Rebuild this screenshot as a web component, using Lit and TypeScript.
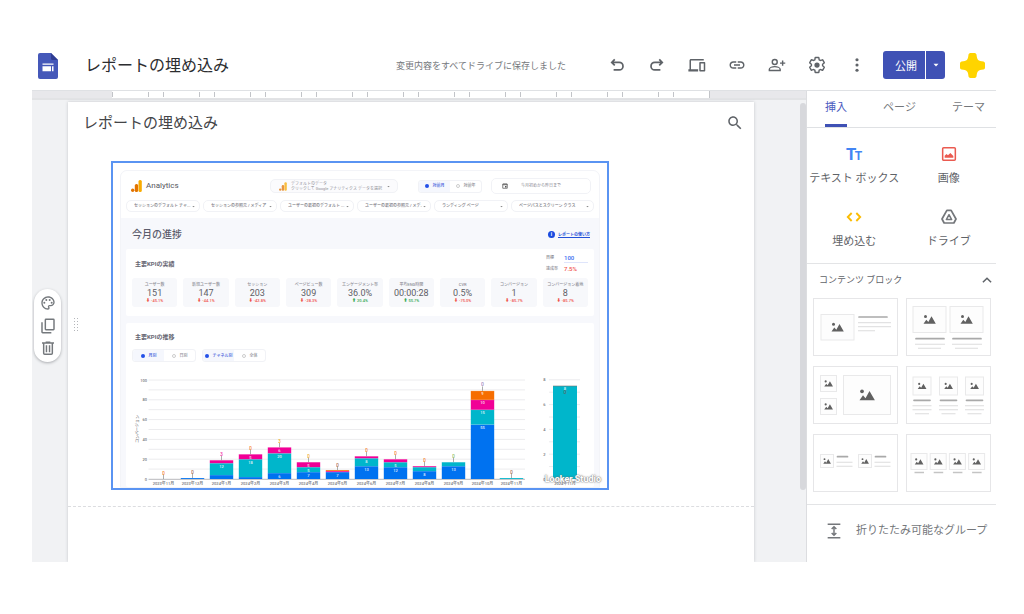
import { LitElement, html, svg, css } from "lit";
import { customElement, property, state } from "lit/decorators.js";

const gearPath =
  "M19.43 12.98c.04-.32.07-.64.07-.98s-.03-.66-.07-.98l2.11-1.65c.19-.15.24-.42.12-.64l-2-3.46c-.09-.16-.26-.25-.44-.25-.06 0-.12.01-.17.03l-2.49 1c-.52-.4-1.08-.73-1.69-.98l-.38-2.65C14.46 2.18 14.25 2 14 2h-4c-.25 0-.46.18-.49.42l-.38 2.65c-.61.25-1.17.59-1.69.98l-2.49-1c-.06-.02-.12-.03-.18-.03-.17 0-.34.09-.43.25l-2 3.46c-.13.22-.07.49.12.64l2.11 1.65c-.04.32-.07.65-.07.98s.03.66.07.98l-2.11 1.65c-.19.15-.24.42-.12.64l2 3.46c.09.16.26.25.44.25.06 0 .12-.01.17-.03l2.49-1c.52.4 1.08.73 1.69.98l.38 2.65c.03.24.24.42.49.42h4c.25 0 .46-.18.49-.42l.38-2.65c.61-.25 1.17-.59 1.69-.98l2.49 1c.06.02.12.03.18.03.17 0 .34-.09.43-.25l2-3.46c.12-.22.07-.49-.12-.64l-2.11-1.65z";

const icons: Record<string, unknown> = {
  undo: svg`<path d="M9 4.5 5 8.500l4 4M5.300 8.500H15a4.500 4.500 0 0 1 0 10H7.500" fill="none" stroke="currentColor" stroke-width="2.300"/>`,
  redo: svg`<path d="m15 4.500 4 4-4 4M18.700 8.500H9a4.500 4.500 0 0 0 0 10h7.500" fill="none" stroke="currentColor" stroke-width="2.300"/>`,
  devices: svg`<path d="M4 6h17V4H4c-1.100 0-2 .9-2 2v11.500H0.500V20.500h13v-3H4V6zm18 2h-6c-.55 0-1 .45-1 1v10.500c0 .55.45 1 1 1h6c.55 0 1-.45 1-1V9c0-.55-.45-1-1-1zm-1 10.500h-4V10h4v8.500z"/>`,
  link: svg`<path d="M3.900 12c0-1.710 1.390-3.100 3.100-3.100h4V7H7c-2.760 0-5 2.240-5 5s2.240 5 5 5h4v-1.900H7c-1.710 0-3.100-1.390-3.100-3.100zM8 13h8v-2H8v2zm9-6h-4v1.900h4c1.710 0 3.100 1.390 3.100 3.100s-1.390 3.100-3.100 3.100h-4V17h4c2.760 0 5-2.240 5-5s-2.240-5-5-5z"/>`,
  person: svg`<g fill="none" stroke="currentColor" stroke-width="1.900"><circle cx="9" cy="8" r="3.300"/><path d="M1.800 19.300v-1.500c0-2.400 4.400-3.600 7.200-3.600s7.200 1.200 7.200 3.600v1.500zM19.500 6v7M16 9.500h7"/></g>`,
  gear: svg`<path d=${gearPath} fill="none" stroke="currentColor" stroke-width="1.900"/><circle cx="12" cy="12" r="3.500"/>`,
  dots: svg`<circle cx="12" cy="5" r="2.100"/><circle cx="12" cy="12" r="2.100"/><circle cx="12" cy="19" r="2.100"/>`,
  search: svg`<path d="M15.500 14h-.79l-.28-.27C15.410 12.590 16 11.110 16 9.500 16 5.910 13.090 3 9.500 3S3 5.910 3 9.500 5.910 16 9.500 16c1.610 0 3.090-.59 4.230-1.570l.27.28v.79l5 4.990L20.490 19l-4.990-5zm-6 0C7.010 14 5 11.990 5 9.500S7.010 5 9.500 5 14 7.010 14 9.500 11.990 14 9.500 14z"/>`,
  palette: svg`<path d="M12 22C6.490 22 2 17.510 2 12S6.490 2 12 2s10 4.040 10 9c0 3.310-2.690 6-6 6h-1.770c-.28 0-.5.22-.5.5 0 .12.05.23.13.33.41.47.64 1.060.64 1.670A2.500 2.500 0 0 1 12 22zm0-18c-4.410 0-8 3.590-8 8s3.590 8 8 8c.28 0 .5-.22.5-.5a.54.54 0 0 0-.14-.35c-.41-.46-.63-1.050-.63-1.650a2.500 2.500 0 0 1 2.500-2.500H16c2.210 0 4-1.790 4-4 0-3.860-3.590-7-8-7z"/><circle cx="6.500" cy="11.500" r="1.500"/><circle cx="9.500" cy="7.500" r="1.500"/><circle cx="14.500" cy="7.500" r="1.500"/><circle cx="17.500" cy="11.500" r="1.500"/>`,
  copy: svg`<g fill="none" stroke="currentColor" stroke-width="2.200"><rect x="8" y="2" width="13" height="15.500" rx="1"/><path d="M3 6.500V21a1 1 0 0 0 1 1h13"/></g>`,
  trash: svg`<g fill="none" stroke="currentColor" stroke-width="2.200"><path d="M3 4.500h18M8.500 3.200h7M5.500 5v15a1.500 1.500 0 0 0 1.500 1.500h10a1.500 1.500 0 0 0 1.500-1.500V5M9.700 8v10.500M14.300 8v10.500"/></g>`,
  text: svg`<text x="0" y="21" font-family="Roboto" font-weight="700" font-size="25">T</text><text x="13" y="21" font-family="Roboto" font-weight="700" font-size="18">T</text>`,
  image: svg`<rect x="2.500" y="2.500" width="19" height="19" rx="1.500" fill="none" stroke="currentColor" stroke-width="2.300"/><path d="M5.500 17.500v-3l2.800-2.500 2.200 2 3.500-3.500 4.500 4.500v2.500z"/>`,
  code: svg`<path d="M8.500 6 2.700 12l5.800 6M15.500 6l5.800 6-5.800 6" fill="none" stroke="currentColor" stroke-width="2.800"/>`,
  drive: svg`<g fill="none" stroke="currentColor" stroke-linejoin="round"><path stroke-width="2.600" d="M8.800 2h6.400L22.500 15l-3.200 6H4.700l-3.200-6z"/><path stroke-width="2.200" d="m12 8.500 4 7.300H8z"/></g>`,
  up: svg`<path d="m5 16 7-7 7 7" fill="none" stroke="currentColor" stroke-width="2.600"/>`,
  group: svg`<g fill="none" stroke="currentColor" stroke-width="2.200"><path d="M2.500 2h19M2.500 22h19M12 6v12M8.500 9 12 5.500 15.500 9M8.500 15l3.500 3.500 3.500-3.500"/></g>`,
  calendar: svg`<path d="M3 4h18v17H3zM3 7h18M8 2v4M16 2v4" fill="none" stroke="currentColor" stroke-width="3"/><path d="M12 12h6v6h-6z"/>`,
  caret: svg`<path d="M6 9h12l-6 6.500z"/>`,
};

@customElement("app-icon")
export class AppIcon extends LitElement {
  @property() name = "";
  static styles = css`
    :host { display: inline-flex; width: 16px; height: 16px; flex: none; }
    svg { width: 100%; height: 100%; fill: currentColor; overflow: visible; }
  `;
  render() {
    return html`<svg viewBox="0 0 24 24" aria-hidden="true">${icons[this.name]}</svg>`;
  }
}

const BLUE = "#0072f0";
const TEAL = "#00b6cb";
const PINK = "#f10096";
const ORANGE = "#f66d00";

interface Month {
  name: string;
  parts: [number, string, string][];
  top?: [string, number, string];
}

const months: Month[] = [
  { name: "2023年11月", parts: [], top: ["0", 6, ORANGE] },
  { name: "2023年12月", parts: [[1, BLUE, ""]], top: ["0", 7, "#a0522d"] },
  { name: "2024年1月", parts: [[4, BLUE, ""], [12, TEAL, "12"], [3, PINK, ""]], top: ["3", 25, PINK] },
  { name: "2024年2月", parts: [[2, BLUE, ""], [18, TEAL, "18"], [5, PINK, "5"]], top: ["0", 31, ORANGE] },
  { name: "2024年3月", parts: [[6, BLUE, "6"], [20, TEAL, "20"], [6, PINK, "6"]], top: ["3", 38, "#f0a000"] },
  { name: "2024年4月", parts: [[7, BLUE, "7"], [5, TEAL, "5"], [5, PINK, "5"]], top: ["0", 23, "#f0a000"] },
  { name: "2024年5月", parts: [[7, BLUE, "7"], [1, PINK, ""], [1, ORANGE, ""]], top: ["0", 14, "#a0522d"] },
  { name: "2024年6月", parts: [[13, BLUE, "13"], [8, TEAL, "8"], [2, PINK, ""]], top: ["0", 29, ORANGE] },
  { name: "2024年7月", parts: [[12, BLUE, "12"], [5, TEAL, "5"], [3, PINK, ""]], top: ["0", 26, ORANGE] },
  { name: "2024年8月", parts: [[8, BLUE, "8"], [4, TEAL, ""], [1, PINK, ""]], top: ["0", 19, ORANGE] },
  { name: "2024年9月", parts: [[13, BLUE, "13"], [4, TEAL, ""]], top: ["0", 23, "#7cb342"] },
  { name: "2024年10月", parts: [[55, BLUE, "55"], [15, TEAL, "15"], [10, PINK, "10"], [9, ORANGE, "9"]], top: ["0", 95, "#8e6bb0"] },
  { name: "2024年11月", parts: [[1, TEAL, ""]], top: ["0", 7, "#a0522d"] },
];

@customElement("kpi-chart")
export class KpiChart extends LitElement {
  static styles = css`
    :host { display: block; }
    svg { display: block; width: 100%; font-family: Roboto, "Noto Sans CJK JP", sans-serif; font-weight: 500; }
    .grid { stroke: #ececee; stroke-width: 1; }
    .base { stroke: #b8b8bc; stroke-width: 1; }
    .tick { font-size: 4px; fill: #77777d; }
    .val { font-size: 4px; fill: #fff; text-anchor: middle; opacity: .85; }
    .top { font-size: 5px; text-anchor: middle; opacity: .8; }
    .stem { stroke: #888; stroke-width: .7; }
    .mid { text-anchor: middle; }
    .end { text-anchor: end; }
  `;
  private bar(m: Month, i: number) {
    const cx = 37.5 + i * 29;
    let y = 117;
    const parts = m.parts.map(([n, color, label]) => {
      y -= n * 0.99;
      return svg`<rect x=${cx - 11.7} y=${y} width="23.4" height=${n * 0.99} fill=${color}/>
        <path d="M${cx - 11.7} ${y}h23.4" stroke="#fff" stroke-opacity=".5" stroke-width=".4"/>
        <text class="val" x=${cx} y=${y + 4.5}>${label}</text>`;
    });
    const ty = m.top ? 117 - m.top[1] * 0.99 : 0;
    return svg`${parts}
      ${m.top
        ? svg`<path class="stem" d="M${cx} ${y}V${ty + 1.5}"/><text class="top" x=${cx} y=${ty + 1.5} fill=${m.top[2]}>${m.top[0]}</text>`
        : ""}
      <text class="tick mid" x=${cx} y="122.5">${m.name}</text>`;
  }
  render() {
    const tens = Array.from({ length: 10 }, (_, i) => i + 1);
    return html`<svg viewBox="0 0 468 125" role="img" aria-label="主要KPIの推移">
      ${tens.map((i) => svg`<path class="grid" d="M22.5 ${117 - i * 9.9}H399"/>`)}
      ${[0, 20, 40, 60, 80, 100].map((n) => svg`<text class="tick end" x="21" y=${118.5 - n * 0.99}>${n}</text>`)}
      <text class="tick mid" transform="translate(12.5 67) rotate(-90)">コンバージョン</text>
      <path class="base" d="M22.5 117.3H399"/>
      ${months.map((m, i) => this.bar(m, i))}
      ${[1, 2, 3, 4, 5, 6, 7, 8].map((i) => svg`<path class="grid" d="M423 ${117 - i * 12.4}H454"/>`)}
      ${[0, 2, 4, 6, 8].map((n) => svg`<text class="tick end" x="419.5" y=${118.5 - n * 12.4}>${n}</text>`)}
      <rect x="427" y="24" width="24" height="93" fill=${TEAL}/>
      <path d="M427 24h24" stroke="#777" stroke-width=".6"/>
      <text class="val" x="439" y="28">8</text>
      <text class="top" x="439" y="32" fill="#6d5a50">0</text>
      <text class="tick mid" x="439" y="122.5">2024年11月</text>
    </svg>`;
  }
}

const kpis = [
  ["ユーザー数", "151", "-45.1%"],
  ["新規ユーザー数", "147", "-44.1%"],
  ["セッション", "203", "-42.8%"],
  ["ページビュー数", "309", "-28.3%"],
  ["エンゲージメント率", "36.0%", "20.4%"],
  ["平均ENG時間", "00:00:28", "55.7%"],
  ["CVR", "0.5%", "-75.0%"],
  ["コンバージョン", "1", "-85.7%"],
  ["コンバージョン着地", "8", "-85.7%"],
];

const filters = [
  "セッションのデフォルト チャ...",
  "セッションの参照元 / メディア",
  "ユーザーの最初のデフォルト ...",
  "ユーザーの最初の参照元 / メデ...",
  "ランディング ページ",
  "ページパスとスクリーン クラス",
];

@customElement("embedded-report")
export class EmbeddedReport extends LitElement {
  static styles = css`
    :host {
      display: block; position: relative; height: 329px; box-sizing: border-box;
      border: 2px solid #5a94f2; padding: 7px 7px 0; background: #fff; overflow: hidden;
      font: 4px/6px Roboto, "Noto Sans CJK JP", sans-serif; color: #8a8a92;
    }
    .report { border: 1px solid #f3f4f8; border-radius: 7px 7px 0 0; overflow: hidden; background: #f7f8fc; }
    .head { background: #fff; height: 47px; padding: 7px 5px 6px; box-sizing: border-box; display: flex; flex-direction: column; gap: 6px; }
    .top { display: flex; align-items: center; height: 16px; padding: 0 3px 0 5px; }
    .logo { width: 11px; height: 12px; margin-right: 4px; }
    .brand { font-size: 8px; line-height: 12px; color: #55555c; flex: 1; }
    .pill { display: flex; align-items: center; border: 1px solid #f1f2f6; border-radius: 5px; box-sizing: border-box; background: #fff; }
    .source { width: 128px; height: 14px; padding: 0 6px 0 8px; gap: 4px; background: #fbfbfd; margin-right: 20px; }
    .source .logo { width: 9px; height: 9px; margin: 0; opacity: .75; }
    .lines { flex: 1; display: flex; flex-direction: column; line-height: 5px; color: #909098; white-space: nowrap; }
    .date { width: 100px; height: 16px; padding: 0 10px; margin-left: 9px; gap: 13px; }
    .date app-icon { width: 6px; height: 6px; color: #555; }
    .caret { width: 5px; height: 5px; color: #888; pointer-events: none; }
    .seg { display: flex; width: 64px; height: 13px; border: 1px solid #f1f2f6; border-radius: 3px; box-sizing: border-box; margin: 0; padding: 0; overflow: hidden; }
    .seg label { flex: 1; display: flex; align-items: center; justify-content: center; gap: 4px; color: #8a8a92; font-weight: 500; white-space: nowrap; }
    .seg label.on { background: #f5f7fd; color: #3b5bdb; }
    .seg input { appearance: none; box-sizing: border-box; margin: 0; width: 4px; height: 4px; border: 1px solid #ccc; border-radius: 50%; }
    .seg input:checked { background: #2350e8; border: 0; }
    .filters { display: grid; grid-template-columns: repeat(5, 74fr) 83fr; gap: 3px; }
    .filter { height: 12px; padding: 0 3px 0 7px; min-width: 0; }
    .filter select { appearance: none; border: 0; background: none; padding: 0; margin: 0; flex: 1; min-width: 0; font: inherit; font-weight: 500; line-height: 8px; height: 8px; color: #77777e; opacity: 1; }
    .body { padding: 8px 5px 0; }
    .bar { display: flex; align-items: center; justify-content: space-between; height: 17px; padding: 0 4px 0 6px; margin-bottom: 6px; }
    h2 { margin: 0; font-size: 10px; line-height: 16px; font-weight: 500; color: #5c5c6c; }
    h3 { margin: 0; font-size: 6px; line-height: 10px; font-weight: 700; color: #666672; }
    .help { display: flex; align-items: center; gap: 3px; font-weight: 700; color: #2350d8; }
    .info { width: 7px; height: 7px; border-radius: 50%; background: #1a4be0; color: #fff; text-align: center; line-height: 7px; font-size: 5px; }
    .card { background: #fff; border-radius: 2px; margin-bottom: 7px; }
    .kpis { height: 67px; box-sizing: border-box; padding: 4px 6px 9px; display: flex; flex-direction: column; justify-content: space-between; }
    .kpihead { display: flex; justify-content: space-between; padding: 0 0 0 3px; }
    .kpihead h3 { padding-top: 6px; }
    .goals { display: grid; grid-template-columns: 18px 24px; row-gap: 1px; align-items: center; margin: 0; font-weight: 500; }
    .goals dd { margin: 0; font-size: 6px; line-height: 9px; color: #f0524a; }
    .goals dd.target { color: #3b6cf0; border-bottom: 1px solid #dfe5fb; }
    .tiles { display: grid; grid-template-columns: repeat(9, 1fr); gap: 6px; }
    .tile { height: 29px; box-sizing: border-box; border-radius: 3px; background: #f7f8fb; display: flex; flex-direction: column; align-items: center; justify-content: center; white-space: nowrap; }
    .num { font-size: 9px; line-height: 10px; color: #5e5e66; }
    .down { color: #f0524a; font-weight: 500; }
    .up { color: #34a853; font-weight: 500; }
    .label { color: #8e8e96; font-weight: 500; }
    .trend { padding-top: 9px; margin: 0; }
    .trend h3 { padding: 0 9px 7px; }
    .toggles { display: flex; gap: 6px; padding: 0 6px; }
    .mark { position: absolute; right: 6px; bottom: 4px; font-size: 9px; line-height: 10px; font-weight: 700; color: #fff; text-shadow: 0 0 2px #666, 0 0 1px #888; }
  `;
  private logo() {
    return html`<svg class="logo" viewBox="0 0 11 12" aria-hidden="true">
      <rect x="7.5" y="0" width="3.3" height="12" rx="1.5" fill="#f9ab00"/>
      <rect x="3.8" y="4" width="3.3" height="8" rx="1.5" fill="#e37400"/>
      <circle cx="1.7" cy="10.3" r="1.7" fill="#e37400"/></svg>`;
  }
  private seg(name: string, a: string, b: string) {
    return html`<fieldset class="seg">
      <label class="on"><input type="radio" name=${name} checked />${a}</label>
      <label><input type="radio" name=${name} />${b}</label>
    </fieldset>`;
  }
  render() {
    return html`
      <div class="report">
        <div class="head">
          <div class="top">
            ${this.logo()}<span class="brand">Analytics</span>
            <div class="pill source">${this.logo()}
              <div class="lines"><span>デフォルトのデータ</span><span>クリックして Google アナリティクス データを選択</span></div>
              <app-icon class="caret" name="caret"></app-icon>
            </div>
            ${this.seg("compare", "対前月", "対前年")}
            <div class="pill date"><app-icon name="calendar"></app-icon><span>今月初めから昨日まで</span></div>
          </div>
          <div class="filters">
            ${filters.map((f) => html`<label class="pill filter"><select aria-label=${f}><option>${f}</option></select><app-icon class="caret" name="caret"></app-icon></label>`)}
          </div>
        </div>
        <div class="body">
          <div class="bar">
            <h2>今月の進捗</h2>
            <a class="help" href="#help"><span class="info">i</span>レポートの使い方</a>
          </div>
          <section class="card kpis">
            <div class="kpihead">
              <h3>主要KPIの実績</h3>
              <dl class="goals"><dt>目標</dt><dd class="target">100</dd><dt>達成率</dt><dd>7.5%</dd></dl>
            </div>
            <div class="tiles">
              ${kpis.map(([l, n, d]) => html`<div class="tile"><span class="label">${l}</span><span class="num">${n}</span>
                <span class=${d[0] === "-" ? "down" : "up"}>${d[0] === "-" ? "⬇" : "⬆"} ${d}</span></div>`)}
            </div>
          </section>
          <section class="card trend">
            <h3>主要KPIの推移</h3>
            <div class="toggles">${this.seg("period", "月別", "日別")}${this.seg("channel", "チャネル別", "全体")}</div>
            <kpi-chart></kpi-chart>
          </section>
        </div>
      </div>
      <span class="mark">Looker Studio</span>`;
  }
}

/* Thumbnail primitives: framed picture placeholder and text rules. */
const pic = (x: number, y: number, w: number, h: number, s: number) => {
  const cx = x + w / 2;
  const cy = y + h / 2;
  return svg`<rect x=${x} y=${y} width=${w} height=${h} fill="#fdfdfd" stroke="#e9e9ea" stroke-width="1"/>
    <g transform="translate(${cx} ${cy}) scale(${s / 12})" fill="#616161">
      <path d="M-6 4.2-3.2.2l2 2.4L2-3.2 6.3 4.2z"/><circle cx="-4" cy="-3" r="1.5"/></g>`;
};
const dark = (x: number, y: number, w: number) =>
  svg`<path d="M${x} ${y}h${w}" stroke="#a9a9a9" stroke-width="1.7" stroke-linecap="round"/>`;
const light = (x: number, y: number, w: number) => svg`<path d="M${x} ${y}h${w}" stroke="#e2e2e3" stroke-width="1.2"/>`;

const blocks = [
  { name: "画像とテキスト", art: [pic(8, 16.5, 33, 25.5, 12), dark(46, 19, 28), light(45, 24.7, 33), light(45, 28.7, 33), light(45, 32.7, 17)] },
  { name: "2 列", art: [7, 44].map((x) => [pic(x, 8.5, 33, 26, 12), dark(x + 3, 40.7, 28), light(x + 2, 46.3, 30), light(x + 5, 50.3, 23)]) },
  { name: "画像ギャラリー", art: [pic(7.5, 9.5, 16, 16, 8.5), pic(7.5, 32.5, 16, 16, 8.5), pic(30.5, 9.5, 47, 39, 15)] },
  { name: "3 列", art: [7, 33.5, 59.5].map((x) => [pic(x, 11, 18, 18, 8.5), dark(x + 1, 34.3, 16), light(x - 0.5, 39.7, 19), light(x - 0.5, 43.7, 19), light(x + 2, 47.7, 14)]) },
  { name: "2 つの項目", art: [7.5, 45.5].map((x) => [pic(x, 20.5, 13, 13, 7.5), dark(x + 17, 22.7, 10), light(x + 16, 28.3, 16), light(x + 16, 32.3, 16)]) },
  { name: "4 列", art: [5, 24.2, 43.4, 62.6].map((x) => [pic(x, 19.5, 16, 16, 8.5), svg`<path d="M${x + 3.5} 38.5h9.5" stroke="#c4c4c4" stroke-width="1.500"/>`]) },
];

@customElement("app-root")
export class AppRoot extends LitElement {
  @state() private tab = "挿入";

  static styles = css`
    :host {
      display: grid; grid-template-rows: 51px minmax(0, 1fr); height: 100vh; box-sizing: border-box;
      padding: 40px 28px 52px 32px; background: #fff; color: #5f6368;
      font-family: Roboto, "Noto Sans CJK JP", sans-serif;
    }
    button { border: 0; background: none; padding: 0; margin: 0; font: inherit; color: inherit; cursor: pointer; }
    header { display: flex; align-items: center; padding: 0 11px 0 6px; border-bottom: 1px solid #dfe1e4; }
    .doc { width: 20px; height: 26px; margin: 2px 27px 0 0; }
    h1 { flex: 1; margin: 0; padding-top: 2px; font-size: 16px; line-height: 24px; font-weight: 400; color: #2c2d30; white-space: nowrap; }
    .saved { font-size: 9px; line-height: 14px; padding-top: 2px; margin-right: 31px; color: #74777b; white-space: nowrap; }
    .tool { width: 40px; height: 32px; display: grid; place-items: center; }
    .tool app-icon { width: 18px; height: 18px; }
    .publish { display: flex; gap: 1px; margin: 0 15px 0 6px; height: 28px; color: #fff; font-size: 11px; }
    .publish button { background: #3f51b5; }
    .main { width: 42px; padding-left: 4px; border-radius: 3px 0 0 3px; }
    .more { width: 19px; border-radius: 0 3px 3px 0; display: grid; place-items: center; }
    .more app-icon { width: 10px; height: 10px; }
    .star { width: 25px; height: 25px; }
    .work { display: grid; grid-template-columns: minmax(0, 1fr) 190px; min-height: 0; }
    .canvas { position: relative; background: #f1f2f4; display: flex; flex-direction: column; min-height: 0; overflow: hidden; }
    .ruler { flex: none; display: grid; grid-template-columns: 80px 1fr 96px; height: 7px; background: #e8e8eb; border-bottom: 2px solid #e2e3e5; }
    .scale {
      grid-column: 2; border-right: 1px solid #c2c4c8; background-color: #fff;
      background-image: linear-gradient(90deg, #c2c4c8 1px, transparent 1px 36px, #c2c4c8 36px 37px, transparent 37px);
      background-size: 51px 5px; background-position: 0 1px; background-repeat: repeat-x;
    }
    .page { flex: 1; margin: 2px 52px 0 36px; background: #fff; box-shadow: 0 0 3px #c4c6ca; min-height: 0; }
    .pagehead { display: flex; align-items: center; justify-content: space-between; height: 42px; padding: 0 10px 0 15px; }
    .pagehead h2 { margin: 0; font-size: 15px; line-height: 22px; font-weight: 400; color: #444548; }
    .pagehead app-icon { width: 18px; height: 18px; }
    .pagehead button { height: 18px; }
    .stage { padding: 17px 145px 16px 43px; border-bottom: 1px dashed #dcdde0; }
    .thumb { position: absolute; right: 0; top: 12px; width: 6px; height: 387px; background: #d7d8dc; border-radius: 3px; }
    .float { position: absolute; left: 2px; top: 198px; width: 27px; height: 73px; border-radius: 14px; background: #fff; box-shadow: 0 1px 3px #a9abaf; display: flex; flex-direction: column; justify-content: space-evenly; align-items: center; color: #74787c; }
    .float button { height: 16px; }
    .grip { position: absolute; left: 41px; top: 226px; width: 6px; height: 15px; background: radial-gradient(circle, #b4b6ba 1px, transparent 1px) 0 0 / 3px 3px; }
    aside { border-left: 1px solid #dcdde0; min-width: 0; overflow: hidden; font-size: 11px; line-height: 16px; }
    .tabs { display: flex; justify-content: space-between; height: 37px; padding: 0 11px 0 18px; box-sizing: border-box; border-bottom: 1px solid #dfe1e4; }
    .tab { border-bottom: 3px solid transparent; color: #74777b; }
    .tab.on { color: #4a5bc0; border-color: #3f51b5; }
    .inserts { display: grid; grid-template-columns: 1fr 1fr; padding: 17px 0 13px; row-gap: 21px; border-bottom: 1px solid #e3e4e6; }
    .insert { display: flex; flex-direction: column; align-items: center; gap: 9px; white-space: nowrap; height: 42px; }
    .insert app-icon { margin-top: 1px; }
    .blue { color: #4285f4; }
    .red { color: #ea5a50; }
    .yellow { color: #fbbc04; }
    .gray { color: #74777b; }
    .blocks { padding: 8px 5px 12px 6px; border-bottom: 1px solid #e3e4e6; }
    .fold { display: flex; width: 100%; align-items: center; justify-content: space-between; font-size: 9px; line-height: 16px; padding: 0 0 0 6px; margin-bottom: 10px; }
    .fold app-icon { width: 14px; height: 14px; margin-right: -3px; }
    .gallery { display: grid; grid-template-columns: 1fr 1fr; gap: 10px 8px; }
    .block { height: 58px; border: 1px solid #e6e6e8; box-sizing: border-box; }
    .block svg { display: block; width: 100%; height: 100%; }
    .group { display: flex; align-items: center; gap: 14px; height: 52px; padding-left: 19px; color: #74777b; white-space: nowrap; }
  `;

  private insert(icon: string, label: string, tone: string) {
    return html`<button class="insert"><app-icon class=${tone} name=${icon}></app-icon><span>${label}</span></button>`;
  }

  render() {
    const tools = [
      ["undo", "元に戻す"], ["redo", "やり直し"], ["devices", "デバイス"], ["link", "リンク"],
      ["person", "共有"], ["gear", "設定"], ["dots", "その他"],
    ];
    return html`
      <header>
        <svg class="doc" viewBox="0 0 20 26" aria-hidden="true">
          <path d="M2 0h11l7 7v17a2 2 0 0 1-2 2H2a2 2 0 0 1-2-2V2a2 2 0 0 1 2-2z" fill="#4558b9"/>
          <path d="M13 0v5.5A1.5 1.5 0 0 0 14.5 7H20z" fill="#2f3d92"/>
          <path d="M4.5 10.500h11v1.300h-11zM4.500 13.200h8.500v5H4.500zM14 13.200h1.500v5H14z" fill="#fff"/>
        </svg>
        <h1>レポートの埋め込み</h1>
        <span class="saved">変更内容をすべてドライブに保存しました</span>
        ${tools.map(([i, l]) => html`<button class="tool" aria-label=${l}><app-icon name=${i}></app-icon></button>`)}
        <div class="publish">
          <button class="main">公開</button>
          <button class="more" aria-label="公開オプション"><app-icon name="caret"></app-icon></button>
        </div>
        <svg class="star" viewBox="0 0 25 25" aria-hidden="true">
          <path fill="#ffd400" d="M10.5 0h4a2 2 0 0 1 2 1.500C17 7 18 8 23.500 8.500a2 2 0 0 1 1.500 2v4a2 2 0 0 1-1.500 2C18 17 17 18 16.500 23.500a2 2 0 0 1-2 1.500h-4a2 2 0 0 1-2-1.500C8 18 7 17 1.500 16.500a2 2 0 0 1-1.500-2v-4a2 2 0 0 1 1.500-2C7 8 8 7 8.500 1.500a2 2 0 0 1 2-1.500z"/>
        </svg>
      </header>
      <div class="work">
        <main class="canvas">
          <div class="ruler"><div class="scale"></div></div>
          <div class="page">
            <div class="pagehead">
              <h2>レポートの埋め込み</h2>
              <button aria-label="検索"><app-icon name="search"></app-icon></button>
            </div>
            <div class="stage"><embedded-report></embedded-report></div>
          </div>
          <div class="float">
            <button aria-label="テーマ"><app-icon name="palette"></app-icon></button>
            <button aria-label="複製"><app-icon name="copy"></app-icon></button>
            <button aria-label="削除"><app-icon name="trash"></app-icon></button>
          </div>
          <div class="grip"></div>
          <div class="thumb"></div>
        </main>
        <aside>
          <nav class="tabs">
            ${["挿入", "ページ", "テーマ"].map((t) => html`<button class="tab ${t === this.tab ? "on" : ""}" @click=${() => (this.tab = t)}>${t}</button>`)}
          </nav>
          <div class="inserts">
            ${this.insert("text", "テキスト ボックス", "blue")}
            ${this.insert("image", "画像", "red")}
            ${this.insert("code", "埋め込む", "yellow")}
            ${this.insert("drive", "ドライブ", "gray")}
          </div>
          <section class="blocks">
            <button class="fold" aria-expanded="true"><span>コンテンツ ブロック</span><app-icon name="up"></app-icon></button>
            <div class="gallery">
              ${blocks.map((b) => html`<button class="block" aria-label=${b.name}><svg viewBox="1 1 83 56">${b.art}</svg></button>`)}
            </div>
          </section>
          <button class="group"><app-icon name="group"></app-icon><span>折りたたみ可能なグループ</span></button>
        </aside>
      </div>
    `;
  }
}
